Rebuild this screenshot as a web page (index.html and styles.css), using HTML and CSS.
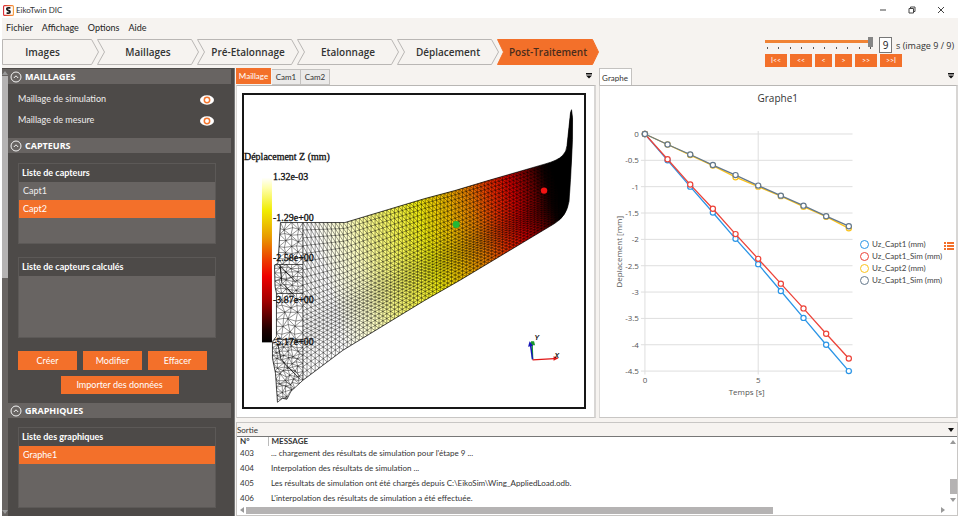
FILE: index.html
```html
<!DOCTYPE html>
<html lang="fr">
<head>
<meta charset="utf-8">
<title>EikoTwin DIC</title>
<link rel="stylesheet" href="styles.css">
</head>
<body>
<header class="titlebar">
  <svg class="logo" viewBox="0 0 11 11" aria-hidden="true">
    <defs><linearGradient id="logoEdge"><stop offset="0" stop-color="#d8232e"/><stop offset="1" stop-color="#f79a3a"/></linearGradient></defs>
    <rect x=".6" y=".6" width="9.8" height="9.8" rx="1" fill="#fff" stroke="url(#logoEdge)" stroke-width="1.1"/>
    <path d="M7.4 2.8H5.200Q3.800 2.800 3.900 4.200Q4 5.200 5.400 5.500Q7 5.800 7 7Q7 8.200 5.600 8.200H3.600" fill="none" stroke="#1c1c1c" stroke-width="1.8"/>
  </svg>
  <h1 class="app-name">EikoTwin DIC</h1>
  <div class="window-buttons">
    <button type="button" aria-label="Réduire"><svg viewBox="0 0 8 8"><path d="M1 4h6"/></svg></button>
    <button type="button" aria-label="Restaurer"><svg viewBox="0 0 8 8"><path d="M1 2.500h4.500V7H1zM2.500 2.500V1H7v4.500H5.500"/></svg></button>
    <button type="button" aria-label="Fermer"><svg viewBox="0 0 8 8"><path d="M1 1l6 6M7 1L1 7"/></svg></button>
  </div>
</header>

<div class="toolbar">
  <div class="toolbar-left">
    <nav class="menu">
      <a href="#">Fichier</a><a href="#">Affichage</a><a href="#">Options</a><a href="#">Aide</a>
    </nav>
    <nav class="steps">
      <button type="button" class="step step-first"><svg viewBox="0 0 98 26" preserveAspectRatio="none"><path d="M.5 .5H90.500L97.500 13L90.500 25.500H.5Z"/></svg><span>Images</span></button>
      <button type="button" class="step"><svg viewBox="0 0 102 26" preserveAspectRatio="none"><path d="M.5 .5H94.500L101.500 13L94.500 25.500H.5L7.500 13Z"/></svg><span>Maillages</span></button>
      <button type="button" class="step"><svg viewBox="0 0 102 26" preserveAspectRatio="none"><path d="M.5 .5H94.500L101.500 13L94.500 25.500H.5L7.500 13Z"/></svg><span>Pré-Etalonnage</span></button>
      <button type="button" class="step"><svg viewBox="0 0 102 26" preserveAspectRatio="none"><path d="M.5 .5H94.500L101.500 13L94.500 25.500H.5L7.500 13Z"/></svg><span>Etalonnage</span></button>
      <button type="button" class="step"><svg viewBox="0 0 102 26" preserveAspectRatio="none"><path d="M.5 .5H94.500L101.500 13L94.500 25.500H.5L7.500 13Z"/></svg><span>Déplacement</span></button>
      <button type="button" class="step step-active"><svg viewBox="0 0 102 26" preserveAspectRatio="none"><path d="M.5 .5H95.500L101.500 13L95.500 25.500H.5L6.500 13Z"/></svg><span>Post-Traitement</span></button>
    </nav>
  </div>
  <div class="player">
    <div class="player-top">
      <div class="slider">
        <input type="range" min="0" max="9" value="9" aria-label="Image">
        <div class="ticks"><i></i><i></i><i></i><i></i><i></i><i></i><i></i><i></i><i></i><i></i></div>
      </div>
      <input class="time" id="time" type="text" value="9">
      <label for="time">s (image 9 / 9)</label>
    </div>
    <div class="player-buttons">
      <button type="button" class="wide">I&lt;&lt;</button><button type="button" class="wide">&lt;&lt;</button><button type="button">&lt;</button><button type="button">&gt;</button><button type="button" class="wide">&gt;&gt;</button><button type="button" class="wide">&gt;&gt;I</button>
    </div>
  </div>
</div>

<div class="workspace">
  <aside class="sidebar">
    <div class="side-scroll"><i class="arrow up"></i><div class="side-thumb"></div><i class="arrow down"></i></div>
    <div class="side-content">
      <h2><svg viewBox="0 0 12 12"><circle cx="6" cy="6" r="5"/><path d="M3.800 7L6 4.800L8.200 7"/></svg>MAILLAGES</h2>
      <div class="meshes">
        <div class="mesh-row"><span>Maillage de simulation</span><button type="button" aria-label="Afficher le maillage de simulation"><svg viewBox="0 0 14 10"><ellipse cx="7" cy="5" rx="7" ry="4.700" fill="#fff"/><circle cx="7" cy="5" r="2.700" fill="#fff" stroke="#f4772f" stroke-width="1.500"/></svg></button></div>
        <div class="mesh-row"><span>Maillage de mesure</span><button type="button" aria-label="Afficher le maillage de mesure"><svg viewBox="0 0 14 10"><ellipse cx="7" cy="5" rx="7" ry="4.700" fill="#fff"/><circle cx="7" cy="5" r="2.700" fill="#fff" stroke="#f4772f" stroke-width="1.500"/></svg></button></div>
      </div>
      <h2><svg viewBox="0 0 12 12"><circle cx="6" cy="6" r="5"/><path d="M3.800 7L6 4.800L8.200 7"/></svg>CAPTEURS</h2>
      <div class="sensors">
        <section class="list"><h3>Liste de capteurs</h3><ul><li>Capt1</li><li class="selected">Capt2</li></ul></section>
        <section class="list"><h3>Liste de capteurs calculés</h3><ul></ul></section>
        <div class="actions">
          <button type="button">Créer</button><button type="button">Modifier</button><button type="button">Effacer</button>
        </div>
        <button type="button" class="import">Importer des données</button>
      </div>
      <h2><svg viewBox="0 0 12 12"><circle cx="6" cy="6" r="5"/><path d="M3.800 7L6 4.800L8.200 7"/></svg>GRAPHIQUES</h2>
      <div class="graphs">
        <section class="list"><h3>Liste des graphiques</h3><ul><li class="selected">Graphe1</li></ul></section>
      </div>
    </div>
  </aside>

  <main class="docks">
    <div class="dock-row">
      <section class="dock">
        <div class="tabs">
          <button type="button" class="tab tab-on">Maillage</button><button type="button" class="tab">Cam1</button><button type="button" class="tab">Cam2</button>
          <button type="button" class="dock-menu" aria-label="Options du panneau"><svg viewBox="0 0 6 6"><path d="M0 0h6v1.500H0zM0 2.500h6L3 5.500z"/></svg></button>
        </div>
        <div class="dock-body scene-body">
          <div class="scene">
            <svg viewBox="244 96 340 311" role="img" aria-label="Déplacement Z">
              <defs>
                <linearGradient id="field" gradientUnits="userSpaceOnUse" x1="330" y1="290" x2="569" y2="226">
                  <stop offset="0" stop-color="#fff"/><stop offset=".14" stop-color="#ffffc4"/><stop offset=".3" stop-color="#f8f860"/><stop offset=".43" stop-color="#f0ec10"/><stop offset=".54" stop-color="#eebc00"/><stop offset=".64" stop-color="#ea8000"/><stop offset=".74" stop-color="#e82a00"/><stop offset=".82" stop-color="#d00000"/><stop offset=".9" stop-color="#700000"/><stop offset=".96" stop-color="#100000"/><stop offset="1" stop-color="#000"/>
                </linearGradient>
                <linearGradient id="scale" x2="0" y2="1">
                  <stop offset="0" stop-color="#fff"/><stop offset=".06" stop-color="#ffffb0"/><stop offset=".2" stop-color="#f0ec00"/><stop offset=".36" stop-color="#e89a00"/><stop offset=".5" stop-color="#ec3c00"/><stop offset=".6" stop-color="#ee0000"/><stop offset=".75" stop-color="#a00000"/><stop offset=".92" stop-color="#200000"/><stop offset="1" stop-color="#000"/>
                </linearGradient>
                <clipPath id="wing"><path id="wingClip"/></clipPath>
              </defs>
              <path id="wingFill" fill="url(#field)" stroke="#111" stroke-width=".7"/>
              <path id="wingMesh" clip-path="url(#wing)" class="mesh"/>
              <path d="M279 265L296 283M280 266L282 284M283 284L295 297M278 345L281 360L300 380" fill="none" stroke="#000" stroke-width=".8"/>
              <path d="M556 161Q564 157 567 150L568 142L571 113L572 110L573 120L572 160L570 190L568 207Q566 216 559 221L565 195Q567 175 556 161Z" fill="#000"/>
              <rect x="262" y="178" width="10" height="165" fill="url(#scale)"/>
              <g class="scene-text">
                <text x="244" y="160">Déplacement Z (mm)</text>
                <text x="273" y="180">1.32e-03</text>
                <text x="273" y="221">-1.29e+00</text>
                <text x="273" y="262">-2.58e+00</text>
                <text x="273" y="304">-3.87e+00</text>
                <text x="273" y="346">-5.17e+00</text>
              </g>
              <circle cx="456.500" cy="225" r="3.500" fill="#22b836"/>
              <circle cx="544.500" cy="191" r="3.200" fill="#f51313"/>
              <path d="M533 360L532.500 345" stroke="#179a2c" stroke-width="1.500"/><path d="M530 346l1.500-4h3l1 4z" fill="#179a2c"/>
              <path d="M533 360L531 346" stroke="#1616b8" stroke-width="1.500"/><path d="M528.500 347.500L530 342L533.500 346.500z" fill="#1616b8"/>
              <path d="M533 360.500L555 359.200" stroke="#e01515" stroke-width="1.300"/><path d="M554 357l5 2-5 2.500z" fill="#e01515"/>
              <g class="axis-text"><text x="535" y="341">Y</text><text x="555" y="359">X</text></g>
            </svg>
          </div>
        </div>
      </section>
      <section class="dock">
        <div class="tabs">
          <button type="button" class="tab tab-graph">Graphe</button>
          <button type="button" class="dock-menu" aria-label="Options du panneau"><svg viewBox="0 0 6 6"><path d="M0 0h6v1.500H0zM0 2.500h6L3 5.500z"/></svg></button>
        </div>
        <div class="dock-body graph-body">
          <h2 class="graph-title">Graphe1</h2>
          <div class="graph-row">
            <svg class="chart" id="chart" viewBox="599 120 258 280" role="img" aria-label="Graphe1"></svg>
            <ul class="legend">
              <li><i class="c-blue"></i>Uz_Capt1 (mm)</li>
              <li><i class="c-red"></i>Uz_Capt1_Sim (mm)</li>
              <li><i class="c-yellow"></i>Uz_Capt2 (mm)</li>
              <li><i class="c-slate"></i>Uz_Capt1_Sim (mm)</li>
            </ul>
            <button type="button" class="legend-toggle" aria-label="Légende"><svg viewBox="0 0 10 8"><path d="M0 0h2v2H0zM3 0h7v2H3zM0 3h2v2H0zM3 3h7v2H3zM0 6h2v2H0zM3 6h7v2H3z"/></svg></button>
          </div>
        </div>
      </section>
    </div>

    <section class="output">
      <div class="output-head"><h2>Sortie</h2><button type="button" aria-label="Options de sortie"><i class="arrow down"></i></button></div>
      <div class="output-body">
        <div class="output-main">
          <table>
            <thead><tr><th>N°</th><th>MESSAGE</th></tr></thead>
            <tbody>
              <tr><td>403</td><td>... chargement des résultats de simulation pour l'étape 9 ...</td></tr>
              <tr><td>404</td><td>Interpolation des résultats de simulation ...</td></tr>
              <tr><td>405</td><td>Les résultats de simulation ont été chargés depuis C:\EikoSim\Wing_AppliedLoad.odb.</td></tr>
              <tr><td>406</td><td>L'interpolation des résultats de simulation a été effectuée.</td></tr>
            </tbody>
          </table>
          <div class="v-scroll"><i class="arrow up"></i><div class="v-thumb"></div><i class="arrow down"></i></div>
        </div>
        <div class="h-scroll"><i class="arrow left"></i><div class="h-track"><div class="h-thumb"></div></div><i class="arrow right"></i></div>
      </div>
    </section>
  </main>
</div>
<script src="script.js"></script>
</body>
</html>
```

FILE: styles.css
```css
* { box-sizing: border-box; }
body {
  margin: 0;
  min-height: 100vh;
  display: flex;
  flex-direction: column;
  padding: 0 2px 2px;
  background: #fff;
  color: #333;
  font: 9px/12px Lato, "Open Sans", sans-serif;
}
h1, h2, h3, ul { margin: 0; padding: 0; font-size: inherit; font-weight: inherit; list-style: none; }
button { margin: 0; padding: 0; border: 0; background: none; font: inherit; color: inherit; }
svg { display: block; }
i { display: block; }

.titlebar { display: flex; align-items: center; height: 18px; padding: 2px 13px 0 1px; }
.logo { width: 11px; height: 11px; margin-right: 2px; }
.app-name { font-size: 8px; color: #333; }
.window-buttons { display: flex; gap: 21px; margin-left: auto; }
.window-buttons svg { width: 8px; height: 8px; fill: none; stroke: #444; stroke-width: 1; }

.toolbar { display: flex; justify-content: space-between; height: 50px; background: #f6f3f0; }
.menu { display: flex; gap: 9px; height: 21px; padding: 3px 4px 0; line-height: 13px; }
.menu a { color: #222; text-decoration: none; }
.steps { display: flex; }
.step { position: relative; width: 102px; height: 26px; margin-left: -2px; font: 600 10px/14px "Open Sans", sans-serif; color: #333; }
.step-first { width: 97px; margin-left: 0; padding-right: 16px; }
.step svg { position: absolute; inset: 0; width: 100%; height: 100%; fill: #f6f3f0; stroke: #b9b6b4; }
.step span { position: relative; }
.step-active { color: #4a2c1c; }
.step-active svg { fill: #f3702a; stroke: #f3702a; }

.player { width: 193px; padding-top: 19px; }
.player-top { display: flex; gap: 4px; font: 9px/17px "Open Sans", sans-serif; }
.slider { width: 108px; margin-right: 2px; }
.slider input { display: block; width: 100%; height: 10px; margin: 0; appearance: none; background: linear-gradient(#f08334, #f08334) 0 3px / 100% 3px no-repeat; }
.slider input::-webkit-slider-thumb { appearance: none; width: 5px; height: 10px; background: #858585; }
.ticks { display: flex; justify-content: space-between; padding: 0 2px; }
.ticks i { width: 1px; height: 2px; background: #555; }
.time { width: 13px; height: 16px; padding: 0; border: 1px solid #777; background: #fff; font: 10px/14px "Open Sans", sans-serif; text-align: center; color: #222; }
.player-buttons { display: flex; gap: 3px; }
.player-buttons button { width: 17px; height: 13px; background: #f3702a; color: #fff; font-size: 7px; line-height: 13px; }
.player-buttons .wide { width: 22px; }

.workspace { flex: 1; display: flex; gap: 1px; background: #f6f3f0; }
.sidebar { display: flex; width: 233px; padding: 1px 3px 0 0; background: #4d4a48; color: #f0eeee; border-right: 1px solid #777; }
.side-scroll { display: flex; flex-direction: column; align-items: center; width: 6px; background: #686462; }
.side-thumb { width: 100%; height: 202px; background: #b5b3b3; }
.arrow { width: 0; height: 0; border: 3px solid transparent; }
.arrow.up { border-top: 0; border-bottom: 4px solid #999; }
.arrow.down { border-bottom: 0; border-top: 4px solid #999; }
.arrow.left { border-left: 0; border-right: 4px solid #999; }
.arrow.right { border-right: 0; border-left: 4px solid #999; }
.side-scroll .up { margin: 2px 0 1px; }
.side-scroll .down { margin: auto 0 2px; }
.side-content { flex: 1; }
.side-content h2 { display: flex; align-items: center; gap: 3px; height: 15px; padding-left: 2px; background: #686462; color: #fff; font: 700 9px/12px "Open Sans", sans-serif; }
.side-content h2 svg { width: 12px; height: 12px; fill: none; stroke: #f4f4f4; }
.meshes { display: flex; flex-direction: column; gap: 9px; padding: 9px 17px 12px 10px; }
.mesh-row { display: flex; justify-content: space-between; align-items: center; line-height: 12px; }
.mesh-row svg { width: 14px; height: 10px; margin-top: 2px; }
.sensors { display: flex; flex-direction: column; gap: 6px; padding: 10px 15px 9px 10px; }
.list { margin-bottom: 7px; border: 1px solid #5c5957; background: #686462; }
.list h3 { height: 18px; padding-left: 3px; background: #4d4a48; color: #fff; font-weight: 700; line-height: 18px; }
.list ul { min-height: 61px; }
.list li { height: 18px; padding-left: 4px; line-height: 17px; }
.list .selected { background: #f3702a; color: #fff; }
.actions { display: flex; gap: 6px; padding-right: 9px; }
.actions button { flex: 1; height: 19px; background: #f3702a; color: #fff; }
.import { align-self: center; width: 118px; height: 18px; margin-right: -5px; background: #f3702a; color: #fff; }
.graphs { padding: 9px 15px 0 10px; }

.docks { flex: 1; min-width: 0; display: flex; flex-direction: column; }
.dock-row { flex: 1; display: grid; grid-template-columns: 1fr 1fr; gap: 3px; }
.dock { display: flex; flex-direction: column; min-width: 0; }
.tabs { display: flex; align-items: flex-end; height: 17px; font-size: 8px; }
.tab { width: 29px; height: 16px; border: 1px solid #c4c2c0; border-left-width: 0; background: #ebeae9; color: #333; }
.tab-on { align-self: flex-start; width: 35px; margin-right: 1px; border: 0; background: #f3702a; color: #fff; }
.tab-graph { width: 33px; height: 18px; margin-bottom: -1px; border-left-width: 1px; border-bottom: 0; background: #fff; }
.dock-menu { margin: 0 4px 6px auto; }
.dock-menu svg { width: 6px; height: 6px; fill: #111; }
.dock-body { flex: 1; border: 1px solid #c4c2c0; border-width: 1px 2px 1px 1px; border-color: #b8b6b4 #d8d6d4 #c8c6c4 #dcdad8; background: #fff; }
.scene-body { display: flex; padding: 7px 8px 8px 5px; }
.scene { flex: 1; border: 2px solid #161616; }
.scene svg { width: 100%; height: 100%; }
.mesh { fill: none; stroke: #000; stroke-opacity: .85; stroke-width: .5; }
.scene-text { font: 10px "Liberation Serif", serif; fill: #111; stroke: #111; stroke-width: .3; }
.axis-text { font: italic 700 7px "Liberation Sans", sans-serif; fill: #111; }

.graph-title { padding-top: 5px; font: 10px/14px "Open Sans", sans-serif; text-align: center; }
.graph-row { display: flex; padding: 15px 2px 0 0; }
.chart { flex: 1; min-width: 0; }
.chart text { fill: #555; font: 8px "Open Sans", sans-serif; }
.legend { display: flex; flex-direction: column; width: 87px; padding: 118px 0 0 3px; font-size: 8px; line-height: 12px; white-space: nowrap; }
.legend li { display: flex; align-items: center; gap: 3px; color: #444; }
.legend i { flex: none; width: 9px; height: 9px; border: 1px solid; border-radius: 50%; }
.c-blue { color: #2b95e6; }
.c-red { color: #ec4339; }
.c-yellow { color: #fbc31b; }
.c-slate { color: #64788c; }
.legend i { border-color: currentColor; }
.legend-toggle { align-self: flex-start; margin-top: 122px; }
.legend-toggle svg { width: 10px; height: 8px; fill: #f3702a; }

.output { margin-top: 4px; border: 1px solid #c8c6c4; background: #fff; }
.output-head { display: flex; justify-content: space-between; align-items: center; height: 14px; padding-right: 3px; border-bottom: 1px solid #777; background: #f6f3f0; font-size: 8px; }
.output-head .arrow { border-top-color: #111; }
.output-main { display: flex; justify-content: space-between; height: 68px; }
.output table { align-self: flex-start; border-collapse: collapse; font-size: 8px; line-height: 15px; color: #333; }
.output th { height: 9px; padding: 0 3px; text-align: left; font-weight: 700; line-height: 9px; }
.output th + th { border-left: 1px solid #bbb; }
.output td { padding: 0 3px; }
.output th:first-child { width: 31px; }
.v-scroll { display: flex; flex-direction: column; align-items: center; width: 8px; padding: 3px 0 3px; }
.v-thumb { width: 7px; height: 15px; margin: auto 0 4px; background: #b5b3b3; }
.h-scroll { display: flex; align-items: center; gap: 2px; height: 10px; padding: 0 12px 0 3px; }
.h-track { flex: 1; }
.h-thumb { width: 76%; height: 7px; background: #b5b3b3; }
```

FILE: script.js
```js
const TOP = [[303,223],[345,223],[365,217],[425,199],[455,191],[490,180.5],[545,164.5],[556,161],[570,150]];
const BOTTOM = [[303,381],[343,351],[425,301],[460,281],[510,251],[555,224],[562,218],[567,210],[570,190]];
const LEFT = [[223,280.5],[264,278],[265.5,274.5],[287,275],[294,276.5],[337,276.5],[342,272.5],[359,272.5],[374,275.5],[403,277.5]];

const OUTLINE = "M280.5 223H345L365 217L425 199L455 191L490 180.5L545 164.5Q558 161 563 156Q567 152 567.5 146L571 113L572 110L573 118L573 140L571 180L569.5 202Q567 217 555 224L510 251L460 281L425 301L343 351L303 381L291 392L287 400L282.5 399L277.5 403L275.5 374L272.5 359V342L276.5 337V294L275 287L274.5 265.5L278 264Z";

function lerpTable(table, x) {
  for (let i = 1; i < table.length; i++) {
    if (x <= table[i][0]) {
      const [x0, y0] = table[i - 1], [x1, y1] = table[i];
      return y0 + (y1 - y0) * (x - x0) / (x1 - x0);
    }
  }
  return table[table.length - 1][1];
}

function meshPath(grid, diagonal) {
  let d = "";
  const seg = (a, b) => { d += `M${a[0].toFixed(1)} ${a[1].toFixed(1)}L${b[0].toFixed(1)} ${b[1].toFixed(1)}`; };
  for (let i = 0; i < grid.length; i++) {
    for (let j = 0; j < grid[i].length; j++) {
      const right = grid[i + 1], here = grid[i][j];
      if (j + 1 < grid[i].length) seg(here, grid[i][j + 1]);
      if (right) seg(here, right[j]);
      if (right && j + 1 < grid[i].length) {
        if (diagonal(i, j)) seg(here, right[j + 1]);
        else seg(grid[i][j + 1], right[j]);
      }
    }
  }
  return d;
}

let seed = 7;
const jitter = () => { seed = (seed * 16807) % 2147483647; return seed / 2147483647 - 0.5; };

// Regular part of the wing
const span = [];
for (let x = 303, dx = 4.1; x < 570; x += dx, dx = Math.max(3.3, dx - 0.01)) {
  const t = lerpTable(TOP, x), b = lerpTable(BOTTOM, x), col = [];
  for (let j = 0; j <= 25; j++) {
    const v = j / 25;
    col.push([x, t + (b - t) * (v + 0.045 * Math.sin(2 * Math.PI * v - 1) + 0.038)]);
  }
  span.push(col);
}
let mesh = meshPath(span, () => true);

// Irregular root, split into zones: [top, bottom, columns, rows]
for (const [y0, y1, nx, ny] of [[223, 265, 4, 7], [265, 294, 5, 7], [294, 340, 4, 7], [340, 404, 6, 16]]) {
  const grid = [];
  for (let i = 0; i <= nx; i++) {
    const col = [];
    for (let j = 0; j <= ny; j++) {
      const y = y0 + (y1 - y0) * j / ny, l = lerpTable(LEFT, y);
      const inside = i > 0 && i < nx && j > 0 && j < ny;
      col.push([l + (303 - l) * i / nx + (inside ? jitter() * 3.5 : 0), y + (inside ? jitter() * 3.5 : 0)]);
    }
    grid.push(col);
  }
  mesh += meshPath(grid, (i, j) => (i + j) % 2 === 0);
}
document.getElementById("wingClip").setAttribute("d", OUTLINE);
document.getElementById("wingFill").setAttribute("d", OUTLINE);
document.getElementById("wingMesh").setAttribute("d", mesh);

// Chart
const px = t => 644 + t * 22.7, py = v => 134 - v * 52.8;
let out = "";
for (let k = 0; k <= 9; k++) {
  const y = py(-k / 2);
  out += `<path d="M640 ${y}H852" stroke="#dedede"/><text x="638" y="${y + 3}" text-anchor="end">${k ? -k / 2 : 0}</text>`;
}
for (const t of [0, 5]) {
  out += `<path d="M${px(t)} 131V375" stroke="#dedede"/><text x="${px(t)}" y="384" text-anchor="middle">${t}</text>`;
}
out += `<text x="746" y="396" text-anchor="middle">Temps [s]</text>`;
out += `<text transform="translate(621 252) rotate(-90)" text-anchor="middle">Deplacement [mm]</text>`;
const series = [
  ["#2b95e6", [0, -.5, -1, -1.49, -1.99, -2.47, -2.98, -3.49, -4, -4.5]],
  ["#ec4339", [0, -.48, -.96, -1.42, -1.9, -2.37, -2.84, -3.31, -3.79, -4.26]],
  ["#fbc31b", [0, -.2, -.4, -.6, -.82, -1, -1.18, -1.38, -1.57, -1.79]],
  ["#64788c", [0, -.2, -.39, -.59, -.78, -.98, -1.17, -1.36, -1.56, -1.75]]
];
for (const [color, values] of series) {
  out += `<polyline fill="none" stroke="${color}" stroke-width="1.3" points="${values.map((v, t) => px(t) + "," + py(v)).join(" ")}"/>`;
  out += values.map((v, t) => `<circle cx="${px(t)}" cy="${py(v)}" r="2.6" fill="#fff" stroke="${color}" stroke-width="1.2"/>`).join("");
}
document.getElementById("chart").innerHTML = out;
```
